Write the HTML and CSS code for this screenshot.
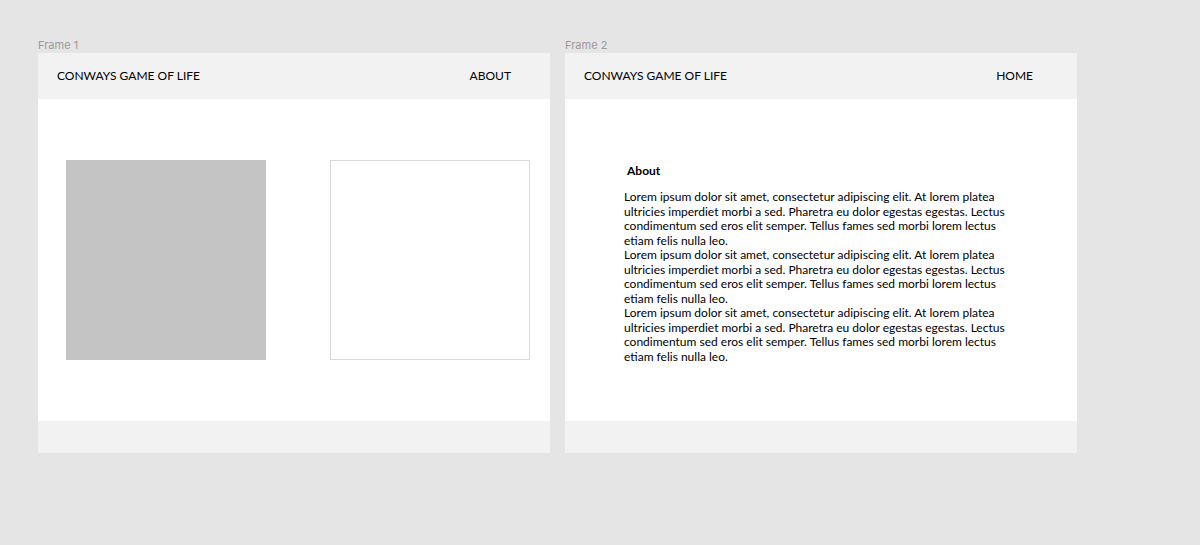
FILE: index.html
```html
<!DOCTYPE html>
<html>
<head>
<meta charset="utf-8">
<link rel="stylesheet" href="styles.css">
</head>
<body>
<div class="canvas">
  <div class="frame-wrap">
    <div class="frame-label">Frame 1</div>
    <div class="frame">
      <div class="header header-1">
        <span class="brand">CONWAYS GAME OF LIFE</span>
        <span class="nav">ABOUT</span>
      </div>
      <div class="content content-1">
        <div class="box box-filled"></div>
        <div class="box box-outline"></div>
      </div>
      <div class="footer"></div>
    </div>
  </div>
  <div class="frame-wrap">
    <div class="frame-label">Frame 2</div>
    <div class="frame">
      <div class="header header-2">
        <span class="brand">CONWAYS GAME OF LIFE</span>
        <span class="nav">HOME</span>
      </div>
      <div class="content content-2">
        <h2 class="about-title">About</h2>
        <p class="about-text">Lorem ipsum dolor sit amet, consectetur adipiscing elit. At lorem platea ultricies imperdiet morbi a sed. Pharetra eu dolor egestas egestas. Lectus condimentum sed eros elit semper. Tellus fames sed morbi lorem lectus etiam felis nulla leo.</p>
        <p class="about-text">Lorem ipsum dolor sit amet, consectetur adipiscing elit. At lorem platea ultricies imperdiet morbi a sed. Pharetra eu dolor egestas egestas. Lectus condimentum sed eros elit semper. Tellus fames sed morbi lorem lectus etiam felis nulla leo.</p>
        <p class="about-text">Lorem ipsum dolor sit amet, consectetur adipiscing elit. At lorem platea ultricies imperdiet morbi a sed. Pharetra eu dolor egestas egestas. Lectus condimentum sed eros elit semper. Tellus fames sed morbi lorem lectus etiam felis nulla leo.</p>
      </div>
      <div class="footer"></div>
    </div>
  </div>
</div>
</body>
</html>
```
FILE: styles.css
```css
html, body {
  margin: 0;
  padding: 0;
  background: #e5e5e5;
  width: 1200px;
  height: 545px;
  overflow: hidden;
}
.canvas {
  display: flex;
  gap: 15px;
  padding: 38px 0 0 38px;
}
.frame-wrap {
  display: flex;
  flex-direction: column;
}
.frame-label {
  font-family: Inter, "Noto Sans", sans-serif;
  font-size: 11px;
  line-height: 15px;
  color: #9a9a9a;
  height: 15px;
}
.frame {
  width: 512px;
  height: 400px;
  background: #ffffff;
  display: flex;
  flex-direction: column;
}
.header {
  height: 46px;
  box-sizing: border-box;
  background: #f2f2f2;
  display: flex;
  align-items: center;
  justify-content: space-between;
  font-family: Lato, "Liberation Sans", sans-serif;
  font-size: 12px;
  color: #000;
  padding-bottom: 2px;
}
.header-1 { padding-left: 19px; padding-right: 39px; }
.header-2 { padding-left: 19px; padding-right: 44px; }
.content {
  flex: 1;
}
.content-1 {
  display: flex;
  justify-content: space-between;
  align-items: flex-start;
  padding: 61px 20px 0 28px;
}
.box {
  width: 200px;
  height: 200px;
  box-sizing: border-box;
}
.box-filled { background: #c4c4c4; }
.box-outline { border: 1px solid #d9d9d9; background: #fff; }
.content-2 {
  padding: 65px 0 0 59px;
  font-family: Lato, "Liberation Sans", sans-serif;
  color: #000;
}
.about-title {
  margin: 0 0 12px 3px;
  font-size: 12px;
  font-weight: 700;
  line-height: 14px;
}
.about-text {
  margin: 0;
  width: 390px;
  font-size: 12px;
  line-height: 14.5px;
}
.footer {
  height: 32px;
  background: #f2f2f2;
}
```
